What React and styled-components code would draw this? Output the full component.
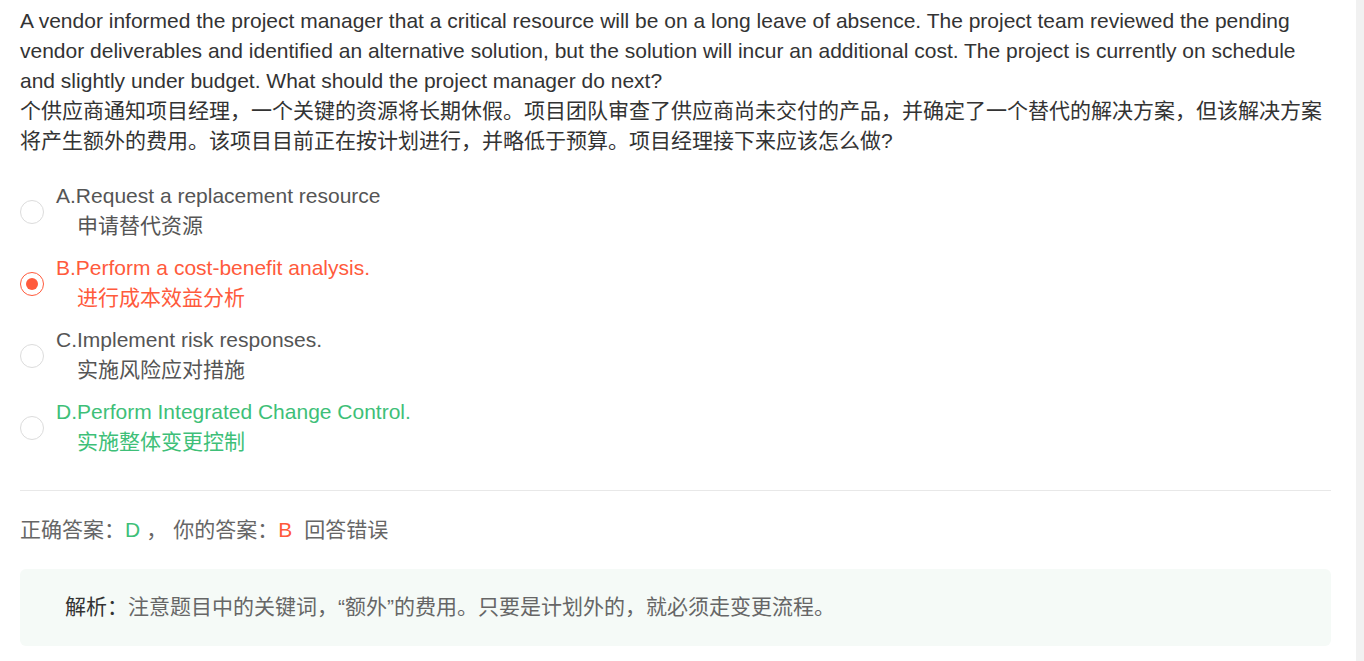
import React from "react";
import styled, { createGlobalStyle } from "styled-components";

const GlobalStyle = createGlobalStyle`
  html, body {
    margin: 0;
    padding: 0;
    background: #fff;
  }
  body {
    font-family: "Liberation Sans", Arial, "Noto Sans CJK SC", sans-serif;
    font-size: 21px;
    color: #333;
    overflow: hidden;
  }
`;

const Page = styled.div`
  display: flex;
  height: 100vh;
`;

const Main = styled.div`
  flex: 1;
  min-width: 0;
  padding: 6px 25px 0 20px;
`;

const ScrollTrack = styled.div`
  width: 8px;
  flex-shrink: 0;
  background: #f1f1f1;
`;

const Question = styled.div`
  line-height: 30px;
  color: #333;
`;

const Para = styled.p`
  margin: 0;
`;

const Options = styled.div`
  margin-top: 25px;
`;

const Option = styled.div`
  display: flex;
  align-items: center;
  gap: 12px;
  margin-bottom: 12px;
  line-height: 30px;
  color: ${(p) => (p.$tone === "red" ? "#ff5a3c" : p.$tone === "green" ? "#3ebf78" : "#555")};
`;

const Radio = styled.span`
  width: 24px;
  height: 24px;
  box-sizing: border-box;
  border-radius: 50%;
  border: 1px solid ${(p) => (p.$checked ? "#ff5a3c" : "#dcdcdc")};
  display: flex;
  align-items: center;
  justify-content: center;
  flex-shrink: 0;
  margin-top: 2px;

  &::after {
    content: "";
    width: 12px;
    height: 12px;
    border-radius: 50%;
    background: ${(p) => (p.$checked ? "#ff5a3c" : "transparent")};
  }
`;

const OptionText = styled.div`
  display: flex;
  flex-direction: column;
`;

const OptionCn = styled.span`
  padding-left: 21px;
`;

const Divider = styled.hr`
  border: none;
  border-top: 1px solid #e8e8e8;
  margin: 33px 0 24px;
`;

const Result = styled.div`
  line-height: 30px;
  color: #666;
`;

const Mark = styled.span`
  color: ${(p) => (p.$tone === "red" ? "#ff5a3c" : "#3ebf78")};
`;

const Gap = styled.span`
  margin-left: ${(p) => p.$size || 12}px;
`;

const Analysis = styled.div`
  margin-top: 24px;
  background: #f5faf7;
  border-radius: 6px;
  padding: 23px 45px 24px;
  line-height: 30px;
  color: #666;
`;

const AnalysisLabel = styled.span`
  color: #333;
`;

const options = [
  { key: "A", en: "Request a replacement resource", cn: "申请替代资源" },
  { key: "B", en: "Perform a cost-benefit analysis.", cn: "进行成本效益分析", tone: "red", checked: true },
  { key: "C", en: "Implement risk responses.", cn: "实施风险应对措施" },
  { key: "D", en: "Perform Integrated Change Control.", cn: "实施整体变更控制", tone: "green" },
];

export default function App() {
  return (
    <Page>
      <GlobalStyle />
      <Main>
        <Question>
          <Para>
            A vendor informed the project manager that a critical resource will be on a long leave of absence. The
            project team reviewed the pending vendor deliverables and identified an alternative solution, but the
            solution will incur an additional cost. The project is currently on schedule and slightly under budget.
            What should the project manager do next?
          </Para>
          <Para>
            个供应商通知项目经理，一个关键的资源将长期休假。项目团队审查了供应商尚未交付的产品，并确定了一个替代的解决方案，但该解决方案将产生额外的费用。该项目目前正在按计划进行，并略低于预算。项目经理接下来应该怎么做?
          </Para>
        </Question>

        <Options>
          {options.map((o) => (
            <Option key={o.key} $tone={o.tone}>
              <Radio $checked={o.checked} />
              <OptionText>
                <span>
                  {o.key}.{o.en}
                </span>
                <OptionCn>{o.cn}</OptionCn>
              </OptionText>
            </Option>
          ))}
        </Options>

        <Divider />

        <Result>
          正确答案：<Mark>D</Mark>
          <Gap $size={6}>，</Gap>
          <Gap $size={6}>你的答案：</Gap>
          <Mark $tone="red">B</Mark>
          <Gap>回答错误</Gap>
        </Result>

        <Analysis>
          <AnalysisLabel>解析：</AnalysisLabel>注意题目中的关键词，“额外”的费用。只要是计划外的，就必须走变更流程。
        </Analysis>
      </Main>
      <ScrollTrack />
    </Page>
  );
}
